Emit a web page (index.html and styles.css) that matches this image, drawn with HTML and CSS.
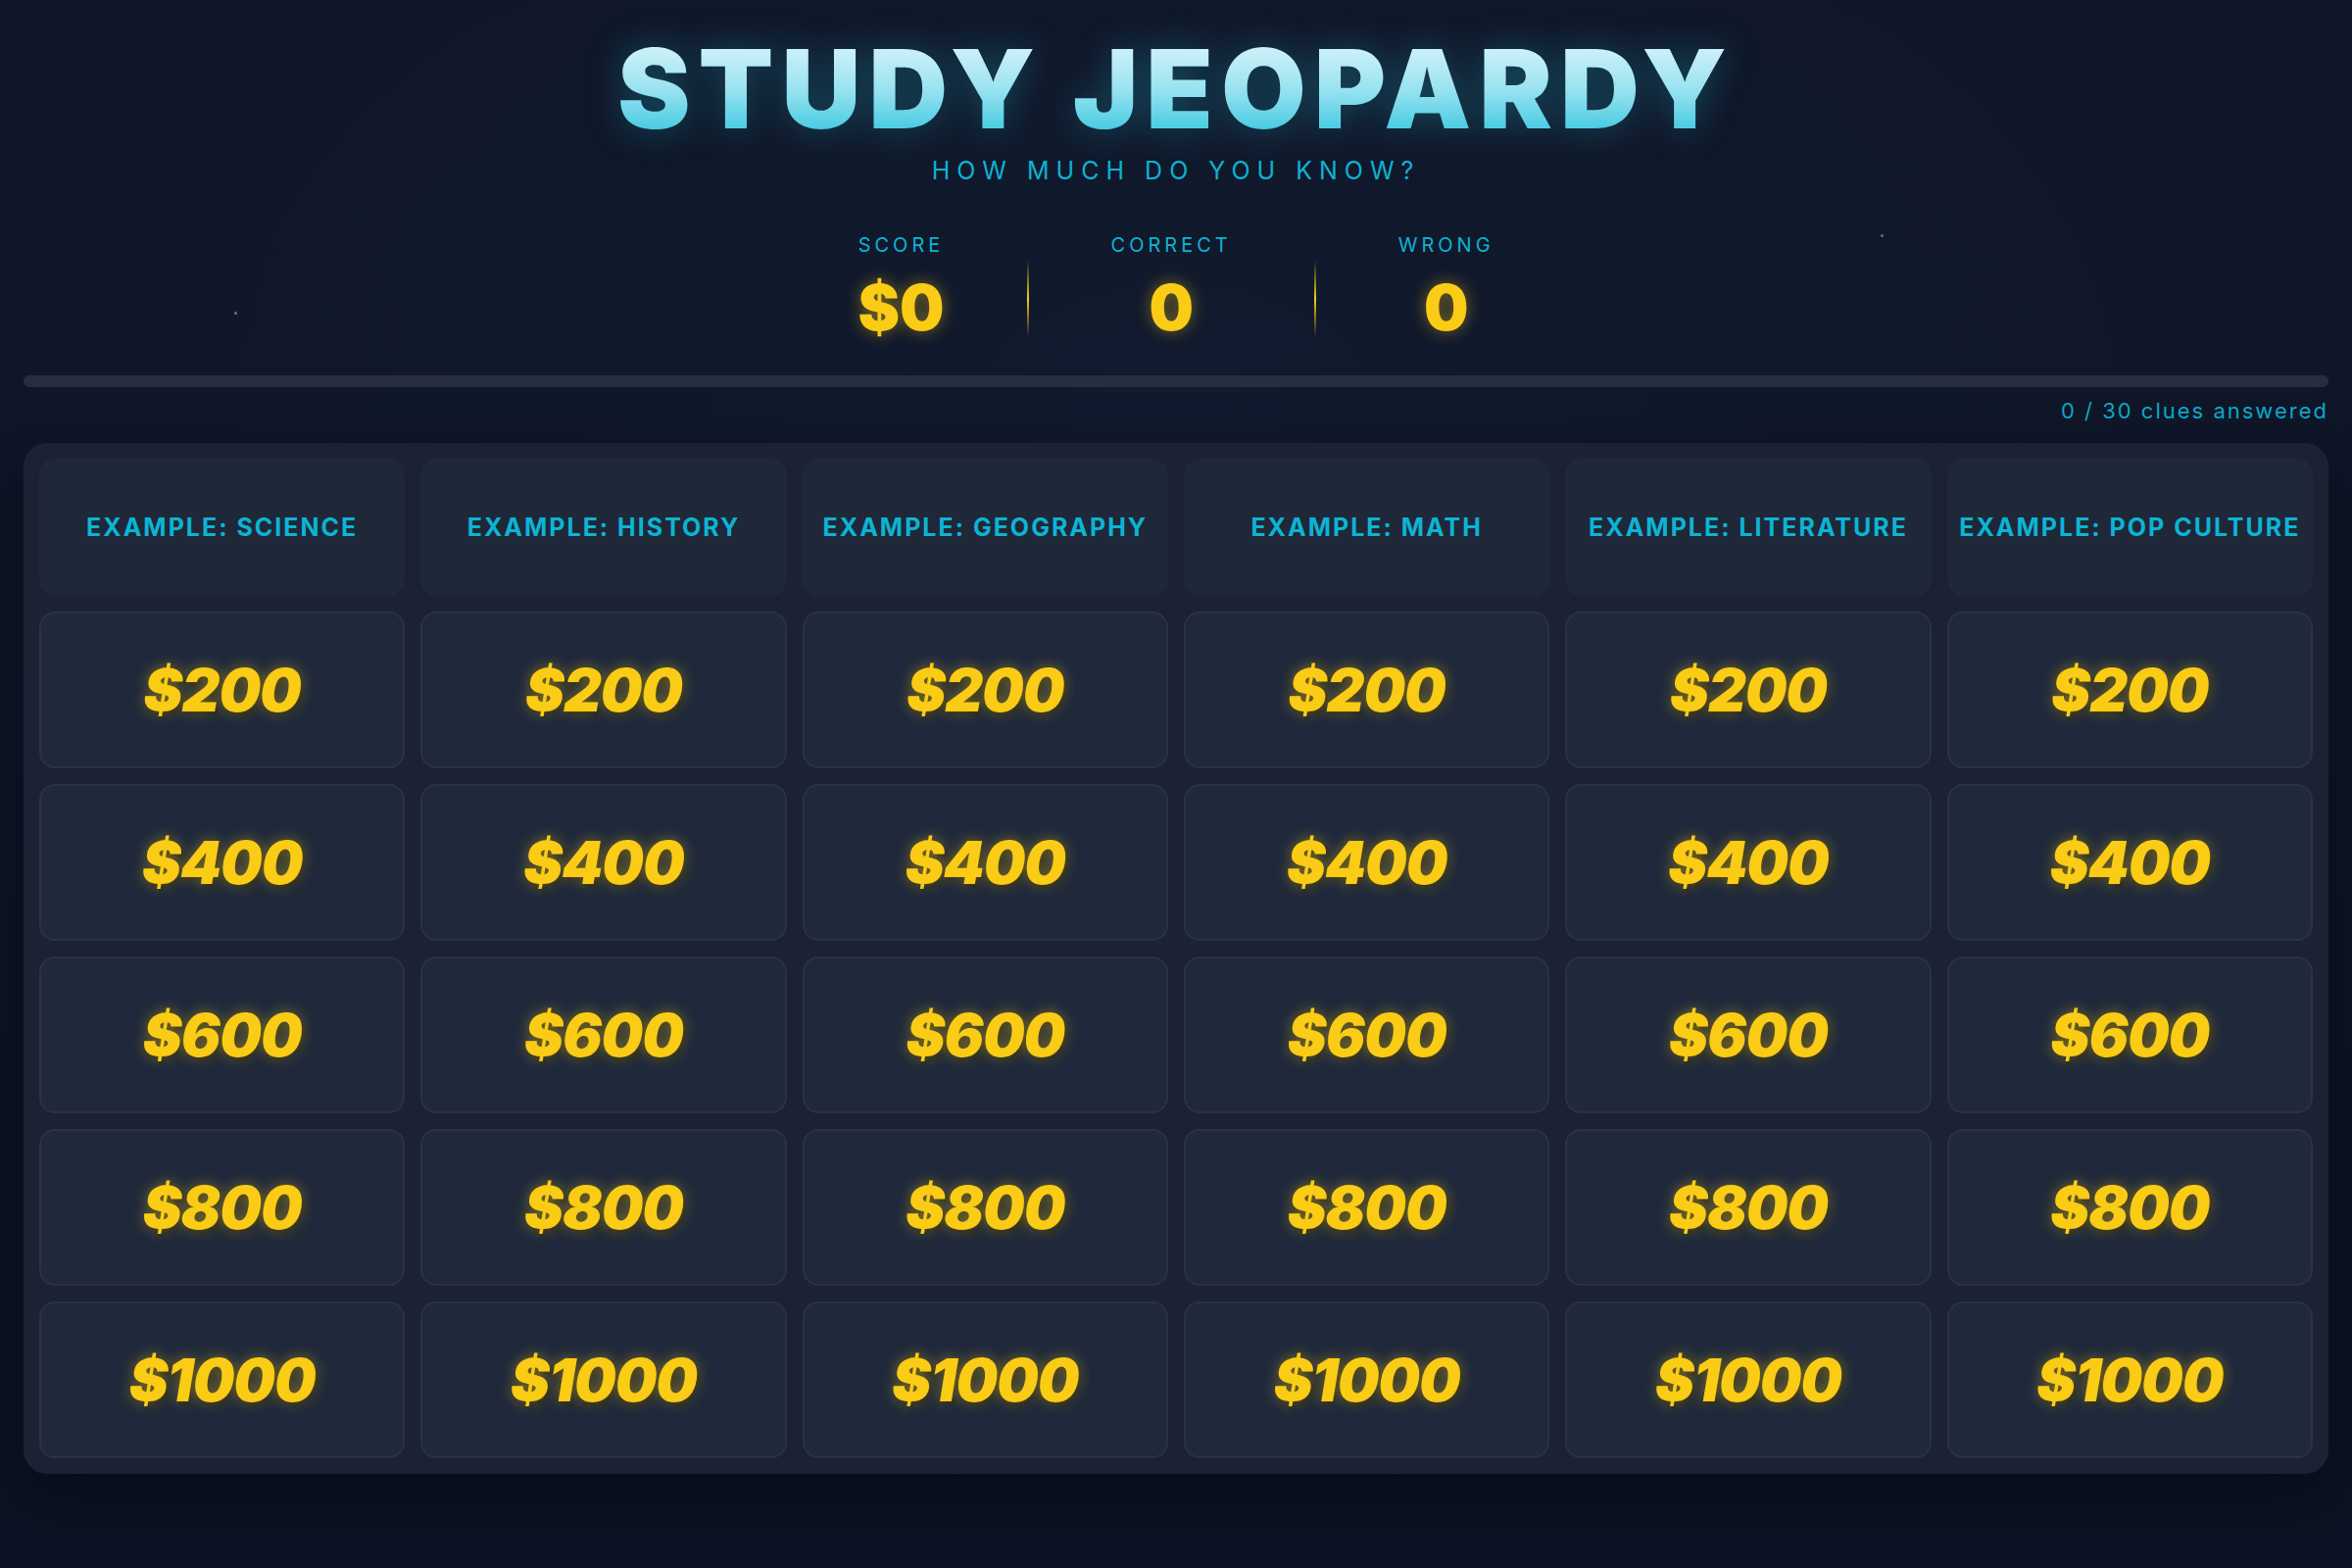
FILE: index.html
```html
<!DOCTYPE html>
<html lang="en">
<head>
<meta charset="utf-8">
<title>Study Jeopardy</title>
<link rel="stylesheet" href="styles.css">
</head>
<body>
<div class="stars">
  <span class="star s1"></span>
  <span class="star s2"></span>
  <span class="star s3"></span>
  <span class="star s4"></span>
</div>
<main class="page">
  <header class="header">
    <h1 class="title">STUDY JEOPARDY</h1>
    <p class="subtitle">HOW MUCH DO YOU KNOW?</p>
    <div class="stats">
      <div class="stat">
        <div class="stat-label">SCORE</div>
        <div class="stat-value">$0</div>
      </div>
      <div class="divider"></div>
      <div class="stat">
        <div class="stat-label">CORRECT</div>
        <div class="stat-value">0</div>
      </div>
      <div class="divider"></div>
      <div class="stat">
        <div class="stat-label">WRONG</div>
        <div class="stat-value">0</div>
      </div>
    </div>
  </header>

  <div class="progress"><div class="progress-fill" style="width:0%"></div></div>
  <div class="progress-text">0 / 30 clues answered</div>

  <section class="board">
    <div class="cat">EXAMPLE: SCIENCE</div>
    <div class="cat">EXAMPLE: HISTORY</div>
    <div class="cat">EXAMPLE: GEOGRAPHY</div>
    <div class="cat">EXAMPLE: MATH</div>
    <div class="cat">EXAMPLE: LITERATURE</div>
    <div class="cat">EXAMPLE: POP CULTURE</div>

    <div class="clue">$200</div><div class="clue">$200</div><div class="clue">$200</div><div class="clue">$200</div><div class="clue">$200</div><div class="clue">$200</div>
    <div class="clue">$400</div><div class="clue">$400</div><div class="clue">$400</div><div class="clue">$400</div><div class="clue">$400</div><div class="clue">$400</div>
    <div class="clue">$600</div><div class="clue">$600</div><div class="clue">$600</div><div class="clue">$600</div><div class="clue">$600</div><div class="clue">$600</div>
    <div class="clue">$800</div><div class="clue">$800</div><div class="clue">$800</div><div class="clue">$800</div><div class="clue">$800</div><div class="clue">$800</div>
    <div class="clue">$1000</div><div class="clue">$1000</div><div class="clue">$1000</div><div class="clue">$1000</div><div class="clue">$1000</div><div class="clue">$1000</div>
  </section>
</main>
</body>
</html>
```

FILE: styles.css
```css
* { box-sizing: border-box; }

html, body {
  margin: 0;
  height: 100%;
}

body {
  font-family: "Inter", "Noto Sans", "DejaVu Sans", sans-serif;
  background: radial-gradient(ellipse 80% 70% at 50% 25%, #111a2e 0%, #0f1729 50%, #0c1324 100%);
  color: #e2e8f0;
  min-height: 1600px;
  position: relative;
  overflow: hidden;
}

.stars { position: absolute; inset: 0; pointer-events: none; }
.star {
  position: absolute;
  width: 3px;
  height: 3px;
  border-radius: 50%;
  background: #64748b;
}
.s1 { left: 239px; top: 318px; }
.s2 { left: 1919px; top: 239px; }
.s3 { left: 1079px; top: 799px; }
.s4 { left: 718px; top: 959px; }

.page {
  padding: 0 24px;
  position: relative;
}

.header {
  text-align: center;
  padding-top: 34px;
}

.title {
  margin: 0;
  font-size: 112px;
  line-height: 1;
  font-weight: 900;
  letter-spacing: 8px;
  background: linear-gradient(180deg, #dff6fb 0%, #9be3f1 50%, #2ec4dd 100%);
  -webkit-background-clip: text;
  background-clip: text;
  color: transparent;
  filter: drop-shadow(0 0 18px rgba(34, 211, 238, 0.28));
}

.subtitle {
  margin: 13px 0 0;
  font-size: 25px;
  line-height: 1.2;
  font-weight: 400;
  letter-spacing: 7px;
  color: #0fb2d0;
}

.stats {
  display: flex;
  justify-content: center;
  align-items: center;
  margin-top: 49px;
}

.stat {
  padding: 0 84px;
  text-align: center;
}

.stat-label {
  font-size: 20px;
  line-height: 1.2;
  letter-spacing: 4px;
  color: #0fb2d0;
}

.stat-value {
  margin-top: 17px;
  font-size: 64px;
  line-height: 1.1;
  font-weight: 900;
  color: #facc15;
  text-shadow: 0 0 16px rgba(250, 204, 21, 0.45);
}

.divider {
  width: 2px;
  height: 78px;
  margin-top: 22px;
  background: linear-gradient(180deg, rgba(250, 204, 21, 0) 0%, #facc15 50%, rgba(250, 204, 21, 0) 100%);
}

.progress {
  margin-top: 34px;
  height: 12px;
  border-radius: 6px;
  background: #262d3e;
  overflow: hidden;
}

.progress-fill {
  height: 100%;
  background: #22d3ee;
}

.progress-text {
  margin-top: 10px;
  text-align: right;
  font-size: 22px;
  line-height: 1.3;
  letter-spacing: 2px;
  color: #0fa6c4;
}

.board {
  margin-top: 18px;
  padding: 16px;
  border-radius: 24px;
  background: #1c2133;
  display: grid;
  grid-template-columns: repeat(6, 1fr);
  grid-template-rows: 140px repeat(5, 160px);
  gap: 16px;
  box-shadow: 0 20px 60px rgba(3, 6, 15, 0.6);
}

.cat {
  background: #1e2839;
  border-radius: 16px;
  display: flex;
  align-items: center;
  justify-content: center;
  text-align: center;
  font-size: 25px;
  font-weight: 700;
  letter-spacing: 2px;
  color: #0cb4d4;
}

.clue {
  background: #1f293b;
  border: 2px solid #283345;
  border-radius: 16px;
  display: flex;
  align-items: center;
  justify-content: center;
  font-size: 60px;
  font-weight: 900;
  font-style: italic;
  letter-spacing: -1px;
  color: #facc15;
  text-shadow: 0 0 14px rgba(250, 204, 21, 0.45), 3px 4px 4px rgba(0, 0, 0, 0.35);
}
```
